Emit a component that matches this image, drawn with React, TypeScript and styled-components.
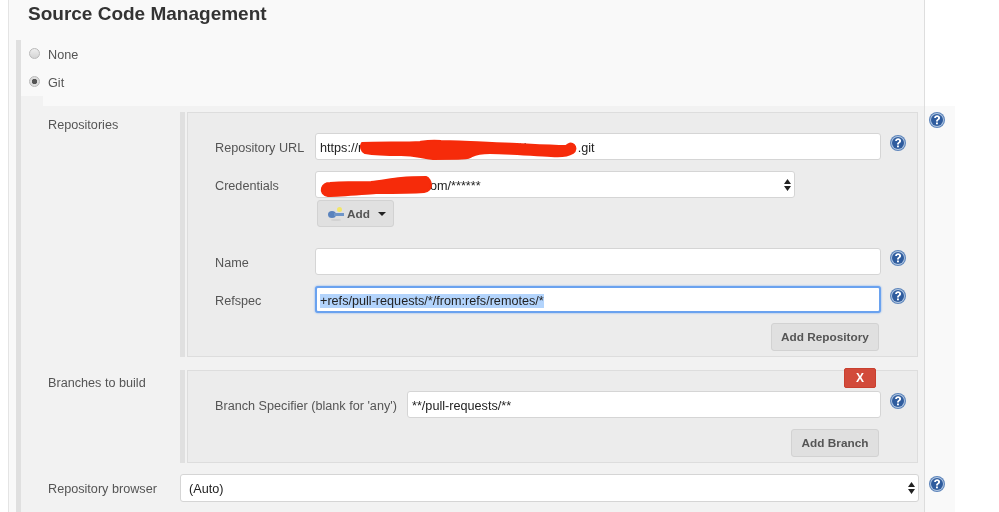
import React from 'react';
import styled, { createGlobalStyle } from 'styled-components';

const GlobalStyle = createGlobalStyle`
  html, body {
    margin: 0;
    padding: 0;
    background: #ffffff;
  }
`;

const Page = styled.div`
  width: 999px;
  height: 512px;
  overflow: hidden;
  background: #ffffff;
  font-family: "Liberation Sans", Arial, sans-serif;
  font-size: 12.65px;
  color: #555555;
  filter: blur(0.35px);
`;

const Sheet = styled.div`
  box-sizing: border-box;
  margin-left: 8px;
  width: 917px;
  height: 512px;
  padding-left: 7px;
  background: #f9f9f9;
  border-left: 1px solid #e4e4e4;
  border-right: 1px solid #dedede;
`;

const Title = styled.h2`
  margin: 0 0 13px 12px;
  height: 27px;
  font-size: 19px;
  line-height: 27px;
  font-weight: 700;
  color: #333333;
`;

const RadioGroup = styled.div`
  border-left: 5px solid #e0e0e0;
  height: 56px;
  display: flex;
  flex-direction: column;
`;

const RadioRow = styled.label`
  box-sizing: border-box;
  height: 28px;
  padding: 2px 0 0 8px;
  display: flex;
  align-items: center;
  gap: 8px;
`;

const Radio = styled.span<{ $checked?: boolean }>`
  box-sizing: border-box;
  width: 11px;
  height: 11px;
  margin-top: -3px;
  border-radius: 50%;
  border: 1px solid #b9b9b9;
  background: ${p => (p.$checked
    ? 'radial-gradient(circle, #555555 0 2.4px, #dddddd 3px)'
    : 'linear-gradient(#eeeeee, #d4d4d4)')};
`;

const Notch = styled.div`
  width: 22px;
  height: 10px;
  background: #f2f2f2;
  border-left: 5px solid #e0e0e0;
`;

const GitPanel = styled.div`
  box-sizing: border-box;
  width: 939px;
  padding-top: 6px;
  border-left: 5px solid #e0e0e0;
  padding-bottom: 20px;
  background: linear-gradient(to right, #f2f2f2 903px, #dddddd 903px, #dddddd 904px, #f9f9f9 904px);
`;

const MainRow = styled.div<{ $gap?: number; $center?: boolean }>`
  display: grid;
  grid-template-columns: 132px 739px 30px;
  padding-left: 27px;
  margin-bottom: ${p => p.$gap ?? 0}px;
  align-items: ${p => (p.$center ? 'center' : 'start')};
`;

const MainLabel = styled.div<{ $center?: boolean }>`
  padding-top: ${p => (p.$center ? 2 : 6)}px;
  line-height: 15px;
`;

const Block = styled.div`
  display: flex;
  margin-right: 1px;
  padding-left: 2px;
  border-left: 5px solid #e0e0e0;
`;

const Box = styled.div`
  box-sizing: border-box;
  position: relative;
  flex: 1;
  padding: 20px 0 5px 27px;
  background: #ececec;
  border: 1px solid #dddddd;
  display: flex;
  flex-direction: column;
`;

const Rows = styled.div`
  display: flex;
  flex-direction: column;
  gap: 11px;
`;

const FormRow = styled.div<{ $label?: number; $top?: number }>`
  display: grid;
  grid-template-columns: ${p => p.$label ?? 100}px ${p => 566 - ((p.$label ?? 100) - 100)}px 26px;
  align-items: start;
  margin-top: ${p => p.$top ?? 0}px;
`;

const FormLabel = styled.div`
  line-height: 30px;
  height: 27px;
`;

const FieldStack = styled.div`
  display: flex;
  flex-direction: column;
  align-items: flex-start;
`;

const Field = styled.div<{ $width?: number; $focus?: boolean }>`
  box-sizing: border-box;
  position: relative;
  display: flex;
  align-items: center;
  justify-content: space-between;
  width: ${p => (p.$width ? `${p.$width}px` : '100%')};
  height: 27px;
  padding: 2px 3px 0 ${p => (p.$focus ? 3 : 4)}px;
  background: #ffffff;
  border: ${p => (p.$focus ? '2px solid #6aa2ef' : '1px solid #d5d5d5')};
  border-radius: 3px;
  box-shadow: ${p => (p.$focus ? '0 0 2px #6aa2ef' : 'none')};
  color: #222222;
  white-space: nowrap;
`;

const BrowserField = styled(Field)`
  height: 28px;
  padding-left: 8px;
`;

const Gap = styled.span<{ $w: number }>`
  display: inline-block;
  width: ${p => p.$w}px;
`;

const Selected = styled.span`
  background: #b3d4fc;
`;

const Redaction = styled.svg`
  position: absolute;
  left: 0;
  top: 0;
  width: 300px;
  height: 30px;
  overflow: visible;
  pointer-events: none;
  path {
    fill: #f62b0a;
    stroke: #f62b0a;
    stroke-width: 2;
    stroke-linejoin: round;
  }
`;

const Button = styled.button<{ $width: number }>`
  box-sizing: border-box;
  width: ${p => p.$width}px;
  height: 28px;
  padding: 0;
  background: #e0e0e0;
  border: 1px solid #d2d2d2;
  border-radius: 3px;
  color: #555555;
  font-family: inherit;
  font-size: 11.8px;
  font-weight: 700;
  display: flex;
  align-items: center;
  justify-content: center;
`;

const AddCredentials = styled(Button)`
  height: 27px;
  margin: 2px 0 0 2px;
  gap: 2px;
  justify-content: flex-start;
  padding-left: 10px;
`;

const Caret = styled.span`
  width: 0;
  height: 0;
  margin-left: 6px;
  border-left: 4px solid transparent;
  border-right: 4px solid transparent;
  border-top: 4px solid #222222;
`;

const Actions = styled.div<{ $top: number }>`
  width: 664px;
  margin-top: ${p => p.$top}px;
  display: flex;
  justify-content: flex-end;
`;

const DeleteButton = styled.button`
  position: absolute;
  top: -3px;
  right: 41px;
  width: 32px;
  height: 20px;
  padding: 0;
  background: #d24a3a;
  border: 1px solid #c8402f;
  border-radius: 2px;
  color: #ffffff;
  font-family: inherit;
  font-size: 12px;
  font-weight: 700;
`;

const HelpIcon = styled.svg<{ $left: number; $top: number }>`
  width: 16px;
  height: 16px;
  margin: ${p => p.$top}px 0 0 ${p => p.$left}px;
  display: block;
  align-self: start;
`;

const ArrowsIcon = styled.svg`
  width: 7px;
  height: 12px;
  margin-top: -2px;
`;

const Help: React.FC<{ left?: number; top?: number }> = ({ left = 9, top = 2 }) => (
  <HelpIcon $left={left} $top={top} viewBox="0 0 16 16">
    <circle cx="8" cy="8" r="8" fill="#5c84bb" />
    <circle cx="8" cy="8" r="6.9" fill="#b4c8e2" />
    <circle cx="8" cy="8" r="6" fill="#2f5c9e" />
    <path d="M5.100 6C5.200 4.100 6.500 3.200 8.100 3.200c1.700 0 3 1 3 2.600 0 1.200-.7 1.800-1.400 2.300-.6.400-.8.800-.8 1.500H7c0-1.200.4-1.800 1.100-2.300.6-.5 1-.8 1-1.400 0-.6-.4-1-1-1-.7 0-1.100.5-1.200 1.200H5.100Z" fill="#ffffff" />
    <rect x="7" y="10.500" width="1.900" height="1.800" fill="#ffffff" />
  </HelpIcon>
);

const SelectArrows: React.FC = () => (
  <ArrowsIcon viewBox="0 0 7 12">
    <path d="M3.500 0 7 5H0ZM0 7h7l-3.500 5Z" fill="#222222" />
  </ArrowsIcon>
);

const KeyIcon: React.FC = () => (
  <svg width="17" height="16" viewBox="0 0 17 16">
    <ellipse cx="8" cy="14" rx="5" ry="1" fill="#d2d2d2" />
    <circle cx="11.500" cy="3.500" r="2.500" fill="#f2e66a" />
    <ellipse cx="4" cy="8.500" rx="4" ry="3.500" fill="#5a83bd" />
    <rect x="6" y="7" width="10" height="3" fill="#6f95c8" />
  </svg>
);

export default function App() {
  return (
    <Page>
      <GlobalStyle />
      <Sheet>
        <Title>Source Code Management</Title>
        <RadioGroup>
          <RadioRow><Radio />None</RadioRow>
          <RadioRow><Radio $checked />Git</RadioRow>
        </RadioGroup>
        <Notch />
        <GitPanel>
          <MainRow $gap={13}>
            <MainLabel>Repositories</MainLabel>
            <Block>
              <Box>
                <Rows>
                  <FormRow>
                    <FormLabel>Repository URL</FormLabel>
                    <Field>
                      <span>https://r<Gap $w={139} />/dat/<Gap $w={52} />.git</span>
                      <Redaction viewBox="0 0 300 30">
                        <path d="M46 9C60 8 90 9 104 8C110 7 115 6 125 7C140 7 170 9 201 10C220 11 235 12 250 12C252 10 255 8 258 11C260 13 260 17 257 19C252 22 245 23 235 22C215 21 190 19 174 19C165 19 160 20 156 22C153 25 145 25 117 25C105 24 100 21 85 21C70 21 55 20 49 19C45 17 44 12 46 9Z" />
                      </Redaction>
                    </Field>
                    <Help />
                  </FormRow>
                  <FormRow>
                    <FormLabel>Credentials</FormLabel>
                    <FieldStack>
                      <Field $width={480}>
                        <span><Gap $w={110} />om/******</span>
                        <SelectArrows />
                        <Redaction viewBox="0 0 300 30">
                          <path d="M6 16C7 13 10 11 14 11C30 10 45 10 55 10C65 9 75 7 85 6C95 5 105 5 110 5C113 6 115 10 115 13C115 16 113 19 108 20C95 21 75 21 60 21C45 22 25 24 12 24C7 23 5 20 6 16Z" />
                        </Redaction>
                      </Field>
                      <AddCredentials $width={77}>
                        <KeyIcon />Add<Caret />
                      </AddCredentials>
                    </FieldStack>
                  </FormRow>
                  <FormRow $top={10}>
                    <FormLabel>Name</FormLabel>
                    <Field />
                    <Help />
                  </FormRow>
                  <FormRow>
                    <FormLabel>Refspec</FormLabel>
                    <Field $focus>
                      <Selected>+refs/pull-requests/*/from:refs/remotes/*</Selected>
                    </Field>
                    <Help />
                  </FormRow>
                </Rows>
                <Actions $top={10}>
                  <Button $width={108}>Add Repository</Button>
                </Actions>
              </Box>
            </Block>
            <Help left={10} top={0} />
          </MainRow>
          <MainRow $gap={11}>
            <MainLabel>Branches to build</MainLabel>
            <Block>
              <Box>
                <DeleteButton>X</DeleteButton>
                <FormRow $label={192}>
                  <FormLabel>Branch Specifier (blank for 'any')</FormLabel>
                  <Field>**/pull-requests/**</Field>
                  <Help />
                </FormRow>
                <Actions $top={11}>
                  <Button $width={88}>Add Branch</Button>
                </Actions>
              </Box>
            </Block>
          </MainRow>
          <MainRow $center>
            <MainLabel $center>Repository browser</MainLabel>
            <BrowserField>(Auto)<SelectArrows /></BrowserField>
            <Help left={10} />
          </MainRow>
        </GitPanel>
      </Sheet>
    </Page>
  );
}
